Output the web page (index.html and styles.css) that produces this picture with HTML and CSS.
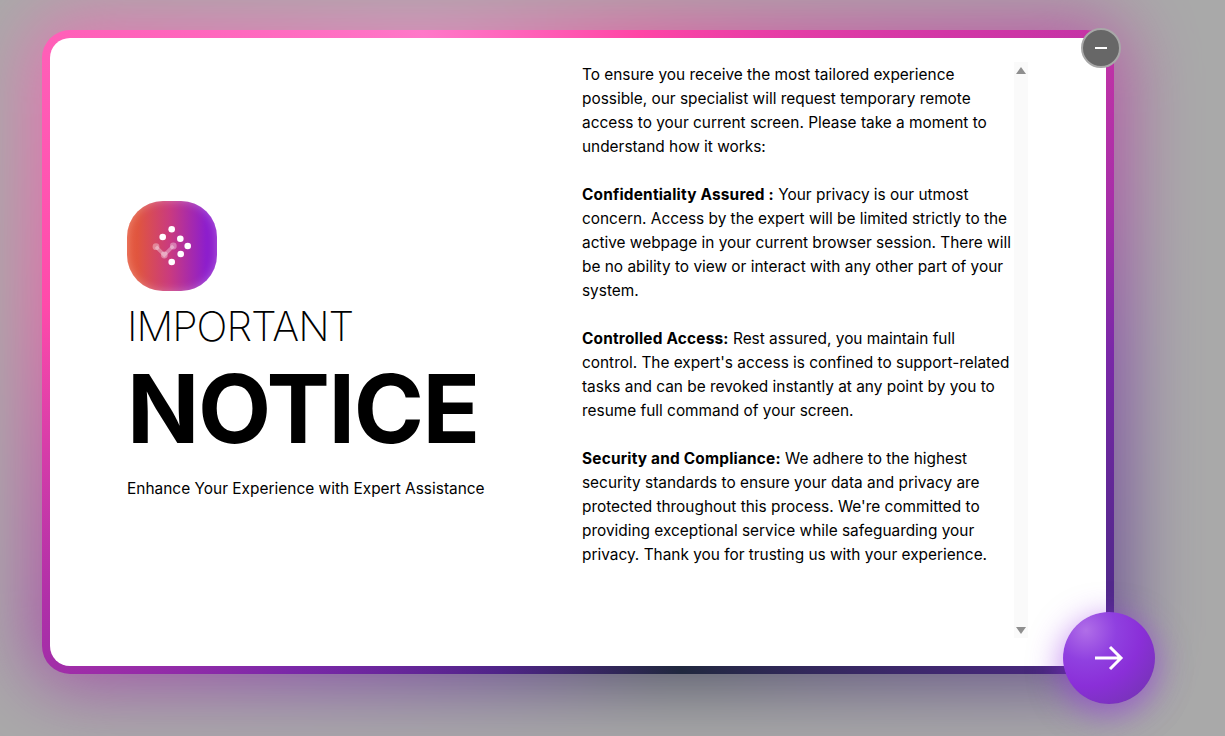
FILE: index.html
```html
<!DOCTYPE html>
<html lang="en">
<head>
    <meta charset="UTF-8">
    <meta name="viewport" content="width=device-width, initial-scale=1.0">
    <title>Important Notice</title>
    <link rel="stylesheet" href="styles.css">
</head>
<body>
    <div class="notice">
        <div class="notice-glow"></div>
        <div class="notice-frame">
            <div class="notice-inner">
                <!-- Left side with logo and heading -->
                <div class="intro">
                    <div class="logo">
                        <svg width="90" height="90" viewBox="0 0 90 90">
                            <path d="M29 45.7 L37.3 54 L46.3 45" fill="none" stroke="#fff" stroke-opacity="0.35" stroke-width="3.5"/>
                            <circle cx="29" cy="45.7" r="3.4" fill="#fff" fill-opacity="0.35"/>
                            <circle cx="46.3" cy="45" r="3.4" fill="#fff" fill-opacity="0.35"/>
                            <circle cx="37.3" cy="54" r="3.4" fill="#fff" fill-opacity="0.35"/>
                            <circle cx="44.7" cy="28.3" r="3.3" fill="#fff"/>
                            <circle cx="35.7" cy="36" r="3.3" fill="#fff"/>
                            <circle cx="53.3" cy="37.7" r="3.3" fill="#fff"/>
                            <circle cx="60.7" cy="45" r="3.3" fill="#fff"/>
                            <circle cx="53.7" cy="53" r="3.3" fill="#fff"/>
                            <circle cx="44.7" cy="61" r="3.3" fill="#fff"/>
                        </svg>
                    </div>
                    <h2>IMPORTANT</h2>
                    <h1>NOTICE</h1>
                    <p>Enhance Your Experience with Expert Assistance</p>
                </div>

                <div class="details">
                    <div class="details-text">
                        <p>To ensure you receive the most tailored experience possible, our specialist will request temporary remote access to your current screen. Please take a moment to understand how it works:</p>
                        <p><b>Confidentiality Assured :</b> Your privacy is our utmost concern. Access by the expert will be limited strictly to the active webpage in your current browser session. There will be no ability to view or interact with any other part of your system.</p>
                        <p><b>Controlled Access:</b> Rest assured, you maintain full control. The expert's access is confined to support-related tasks and can be revoked instantly at any point by you to resume full command of your screen.</p>
                        <p><b>Security and Compliance:</b> We adhere to the highest security standards to ensure your data and privacy are protected throughout this process. We're committed to providing exceptional service while safeguarding your privacy. Thank you for trusting us with your experience.</p>
                    </div>
                    <div class="scrollbar">
                        <span class="arrow-up"></span>
                        <span class="arrow-down"></span>
                    </div>
                </div>
            </div>
        </div>

        <button class="close-btn" aria-label="Minimise"><span></span></button>
        <button class="next-btn" aria-label="Next">
            <svg width="32" height="26" viewBox="0 0 32 26">
                <path d="M2 13 H28 M17 2 L28 13 L17 24" fill="none" stroke="#fff" stroke-width="3"/>
            </svg>
        </button>
    </div>
</body>
</html>
```

FILE: styles.css
```css
html, body {
    height: 100%;
}
body {
    margin: 0;
    background: #a9a9a9;
    color: #000;
    font-family: "Inter", "Liberation Sans", sans-serif;
    overflow: hidden;
}
.notice {
    position: relative;
    width: 1072px;
    height: 644px;
    margin: 30px 0 0 42px;
}
.notice-glow, .notice-frame {
    background: conic-gradient(from 334deg at 50% 50%, #ff78c8 0deg, #ff45a5 37deg, #cc35a5 80deg, #a82ea8 100deg, #7a28a8 116deg, #50288a 141deg, #20283e 188deg, #4f2488 220deg, #7a28a8 248deg, #b030a8 271deg, #ff4aaa 301deg, #ff5bb5 321deg, #ff78c8 360deg);
}
.notice-glow {
    position: absolute;
    inset: -12px;
    border-radius: 40px;
    filter: blur(36px);
    opacity: 0.68;
}
.notice-frame {
    position: relative;
    height: 100%;
    box-sizing: border-box;
    padding: 8px;
    border-radius: 28px;
}
.notice-inner {
    display: flex;
    height: 100%;
    border-radius: 20px;
    background: #fff;
}
.intro {
    width: 532px;
    box-sizing: border-box;
    padding: 0 0 3px 77px;
    display: flex;
    flex-direction: column;
    justify-content: center;
    align-items: flex-start;
}
.logo {
    width: 90px;
    height: 90px;
    border-radius: 36px;
    background: linear-gradient(90deg, #e65a3e 0%, #e0553f 12%, #c93a80 48%, #8d1ecc 88%);
    box-shadow: inset 0 0 10px rgba(255, 255, 255, 0.3);
}
.intro h2 {
    margin: 8px 0 0;
    font-size: 41px;
    line-height: 54px;
    font-weight: 200;
    letter-spacing: -1px;
}
.intro h1 {
    margin: 1px 0 0;
    font-size: 95px;
    line-height: 110px;
    font-weight: 700;
    letter-spacing: -1.5px;
}
.intro p {
    margin: 13px 0 0;
    font-size: 15.45px;
    line-height: 24px;
}
.details {
    display: flex;
    padding-top: 24px;
    height: 576px;
}
.details-text {
    width: 432px;
    box-sizing: border-box;
    padding: 1px 2px 0 0;
    font-size: 15.4px;
    line-height: 24px;
}
.details-text p {
    margin: 0 0 24px;
}
.details-text b {
    font-weight: 700;
    letter-spacing: 0.2px;
}
.scrollbar {
    width: 14px;
    display: flex;
    flex-direction: column;
    justify-content: space-between;
    align-items: center;
    padding: 5px 0 4px;
    box-sizing: border-box;
    background: #fafafa;
}
.arrow-up, .arrow-down {
    width: 0;
    height: 0;
    border-left: 5px solid transparent;
    border-right: 5px solid transparent;
}
.arrow-up {
    border-bottom: 7px solid #8f8f8f;
}
.arrow-down {
    border-top: 7px solid #8f8f8f;
}
.close-btn {
    position: absolute;
    top: -2px;
    right: -7px;
    width: 40px;
    height: 40px;
    padding: 0;
    border: 2px solid #a8a8a8;
    border-radius: 50%;
    background: #676767;
    display: flex;
    align-items: center;
    justify-content: center;
}
.close-btn span {
    width: 12px;
    height: 2px;
    background: #fff;
}
.next-btn {
    position: absolute;
    top: 582px;
    right: -41px;
    width: 92px;
    height: 92px;
    padding: 0;
    border: 0;
    border-radius: 50%;
    background: radial-gradient(circle at 25% 20%, #b06ee8 0%, #9040e0 30%, #8a2fd8 55%, #6e35a8 100%);
    box-shadow: 0 8px 30px 4px rgba(150, 50, 230, 0.5);
    display: flex;
    align-items: center;
    justify-content: center;
}
```
